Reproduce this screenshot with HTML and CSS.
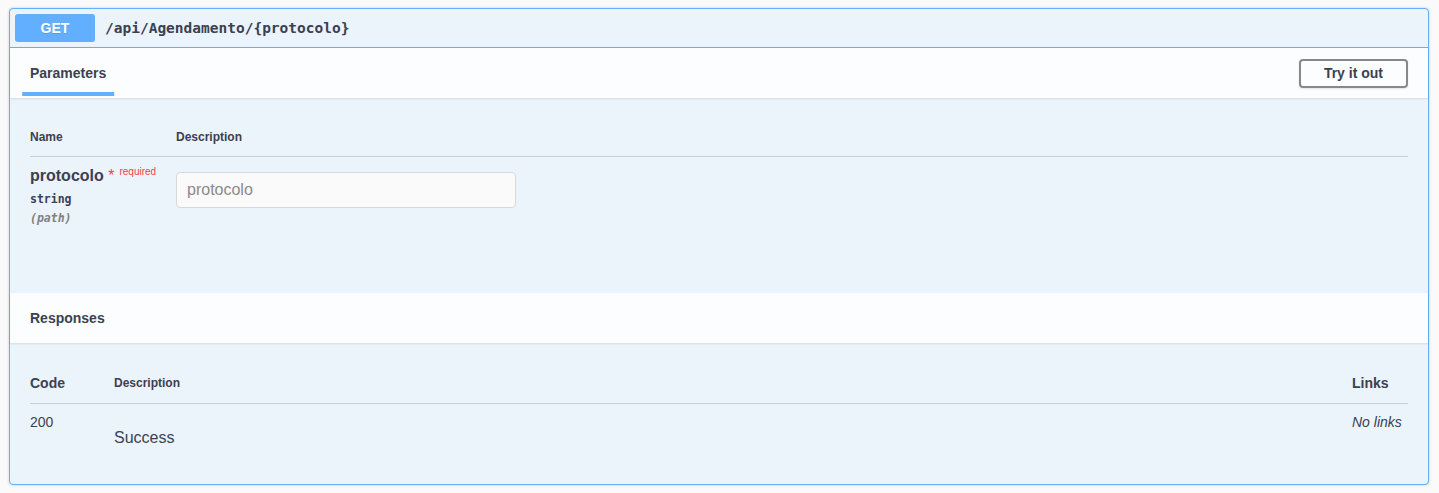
FILE: index.html
```html
<!DOCTYPE html>
<html lang="en">
<head>
  <meta charset="UTF-8" />
  <title>GET /api/Agendamento/{protocolo}</title>
  <link rel="stylesheet" href="styles.css">
</head>
<body>
  <div class="opblock opblock-get">
    <div class="summary">
      <span class="method">GET</span>
      <span class="path">/api/Agendamento/{protocolo}</span>
    </div>

    <div class="section-header">
      <div class="tab-item active"><span>Parameters</span></div>
      <button class="try-out">Try it out</button>
    </div>

    <div class="params">
      <div class="params-head">
        <div class="col-name">Name</div>
        <div>Description</div>
      </div>
      <div class="param-row">
        <div class="col-name">
          <div class="param-name">protocolo <span class="star">*</span><span class="required">required</span></div>
          <div class="param-type">string</div>
          <div class="param-in">(path)</div>
        </div>
        <div class="param-desc">
          <input type="text" placeholder="protocolo">
        </div>
      </div>
    </div>

    <div class="section-header">
      <h4>Responses</h4>
    </div>

    <div class="responses">
      <div class="resp-head">
        <div class="col-code big">Code</div>
        <div class="col-desc">Description</div>
        <div class="col-links big">Links</div>
      </div>
      <div class="resp-row">
        <div class="col-code">200</div>
        <div class="col-desc"><p>Success</p></div>
        <div class="col-links"><i>No links</i></div>
      </div>
    </div>
  </div>
</body>
</html>
```

FILE: styles.css
```css
* {
  margin: 0;
  padding: 0;
  box-sizing: border-box;
}

body {
  background: #fafafa;
  padding: 8px 10px 8px 9px;
  font-family: "Liberation Sans", Arial, sans-serif;
  color: #3b4151;
}

.opblock {
  border: 1px solid #61affe;
  border-radius: 4px;
  background: #ebf3fb;
  box-shadow: 0 0 3px rgba(0, 0, 0, 0.19);
}

.summary {
  display: flex;
  align-items: center;
  padding: 5px;
  border-bottom: 1px solid #61affe;
}

.method {
  min-width: 80px;
  height: 28px;
  line-height: 28px;
  text-align: center;
  background: #61affe;
  color: #fff;
  font-size: 14px;
  font-weight: 700;
  border-radius: 3px;
  text-shadow: 0 1px 0 rgba(0, 0, 0, 0.1);
}

.path {
  margin-left: 10px;
  font-family: "DejaVu Sans Mono", monospace;
  font-size: 14.5px;
  font-weight: 700;
  color: #3b4151;
}

.section-header {
  display: flex;
  align-items: center;
  justify-content: space-between;
  height: 50px;
  padding: 0 20px;
  background: #fbfdfe;
  box-shadow: 0 1px 2px rgba(0, 0, 0, 0.1);
  position: relative;
}

.section-header h4,
.tab-item span {
  font-size: 14px;
  font-weight: 700;
  line-height: 16px;
}

.tab-item span {
  position: relative;
  display: inline-block;
}

.tab-item span::after {
  content: "";
  position: absolute;
  left: 50%;
  bottom: -15px;
  width: 120%;
  height: 4px;
  transform: translateX(-50%);
  background: #61affe;
}

.try-out {
  font-family: inherit;
  font-size: 14px;
  font-weight: 700;
  color: #3b4151;
  background: transparent;
  border: 2px solid #888;
  border-radius: 4px;
  padding: 5px 23px;
  line-height: 15px;
  box-shadow: 0 1px 2px rgba(0, 0, 0, 0.1);
}

.params {
  height: 195px;
  padding: 20px;
}

.params-head {
  display: flex;
  font-size: 12px;
  font-weight: 700;
  line-height: 14px;
  padding: 12px 0;
  border-bottom: 1px solid #c8ced9;
}

.col-name {
  width: 146px;
  flex-shrink: 0;
}

.param-row {
  display: flex;
  padding-top: 10px;
}

.param-name {
  font-size: 16px;
  font-weight: 700;
  line-height: 18px;
}

.star {
  color: #f93e3e;
  font-weight: 400;
}

.required {
  position: relative;
  top: -6px;
  padding-left: 5px;
  font-size: 10px;
  font-weight: 400;
  color: #f93e3e;
}

.param-type {
  padding: 5px 0;
  font-family: "DejaVu Sans Mono", monospace;
  font-size: 11.5px;
  font-weight: 600;
  line-height: 14px;
}

.param-in {
  font-family: "DejaVu Sans Mono", monospace;
  font-size: 11.5px;
  font-style: italic;
  font-weight: 600;
  line-height: 14px;
  color: #808080;
}

.param-desc input {
  margin-top: 5px;
  width: 340px;
  height: 36px;
  padding: 8px 10px;
  font-family: inherit;
  font-size: 16px;
  border: 1px solid #d9d9d9;
  border-radius: 4px;
  background: #fafafa;
}

.param-desc input::placeholder {
  color: #8a8a8a;
}

.responses {
  height: 141px;
  padding: 20px;
}

.resp-head,
.resp-row {
  display: flex;
}

.resp-head {
  align-items: center;
  padding: 12px 0;
  border-bottom: 1px solid #c8ced9;
  font-size: 12px;
  font-weight: 700;
  line-height: 16px;
}

.resp-head .big {
  font-size: 14px;
}

.col-code {
  width: 84px;
  flex-shrink: 0;
}

.col-desc {
  flex: 1;
}

.col-links {
  width: 56px;
  flex-shrink: 0;
}

.resp-row {
  padding-top: 10px;
  font-size: 14px;
  line-height: 16px;
}

.resp-row p {
  margin-top: 15px;
  font-size: 16px;
  line-height: 18px;
}

.resp-row i {
  color: #3b4151;
  white-space: nowrap;
}
```
